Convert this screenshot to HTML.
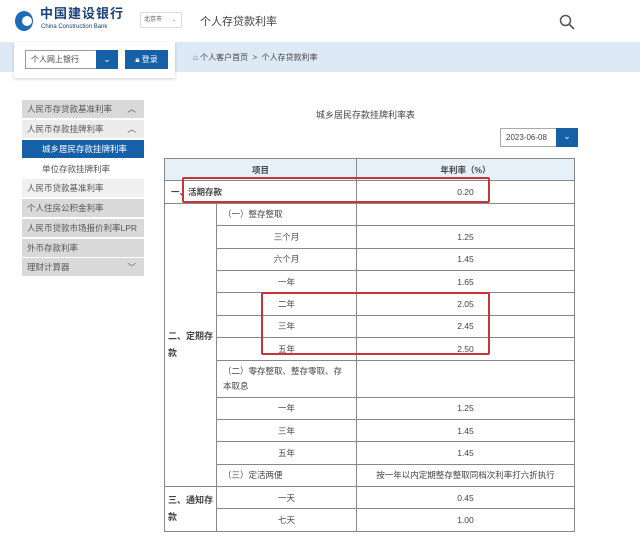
<!DOCTYPE html><html><head><meta charset="utf-8"><style>
*{margin:0;padding:0;box-sizing:border-box}
body{width:640px;height:545px;background:#fff;font-family:"Liberation Sans","Noto Sans CJK SC",sans-serif;position:relative;overflow:hidden;color:#333}
.a{position:absolute}
.side div{position:absolute;left:22px;width:122px;height:18px;font-size:8.5px;line-height:18px;padding-left:5px;color:#555}
table{position:absolute;left:164px;top:158px;width:411px;border-collapse:collapse;font-size:8.5px;color:#444;line-height:12px}
td{border:1px solid #888;padding:0 6px;height:22.4px}
.c{text-align:center}
.b{font-weight:bold}
.red{position:absolute;border:2px solid #c8343a;border-radius:2px}
</style></head><body>
<!-- header -->
<div class="a" style="left:15px;top:11px;width:18px;height:20px;border-radius:50%;background:#1d6bb5"></div>
<div class="a" style="left:22px;top:16px;width:10px;height:10px;border-radius:50%;background:#fff"></div>
<div class="a" style="left:40px;top:6px;font-size:13px;line-height:16px;font-weight:bold;color:#1a3f7a;letter-spacing:1px">中国建设银行</div>
<div class="a" style="left:41px;top:23px;font-size:6px;line-height:8px;color:#1a3f7a">China Construction Bank</div>
<div class="a" style="left:140px;top:12px;width:42px;height:16px;border:1px solid #ddd;font-size:6px;line-height:14px;padding-left:3px;color:#555">北京市 <span style="margin-left:8px;color:#999">⌄</span></div>
<div class="a" style="left:200px;top:13px;font-size:11px;color:#444">个人存贷款利率</div>
<svg class="a" style="left:559px;top:14px" width="16" height="16"><circle cx="6.5" cy="6.5" r="5" fill="none" stroke="#555" stroke-width="1.5"/><line x1="10" y1="10" x2="15" y2="15" stroke="#555" stroke-width="1.6"/></svg>
<div class="a" style="left:0;top:42px;width:640px;height:30px;background:#dde9f4"></div>
<div class="a" style="left:14px;top:42px;width:161px;height:36px;background:#fff;box-shadow:0 1px 3px rgba(0,0,0,.2)"></div>
<div class="a" style="left:25px;top:50px;width:93px;height:19px;border:1px solid #999;font-size:8px;line-height:17px;padding-left:5px;color:#444">个人网上银行</div>
<div class="a" style="left:96px;top:50px;width:22px;height:19px;background:#1660a8;color:#fff;font-size:9px;text-align:center;line-height:18px">⌄</div>
<div class="a" style="left:125px;top:50px;width:43px;height:19px;background:#1660a8;color:#fff;font-size:8px;line-height:19px;text-align:center">🔒︎ 登录</div>
<div class="a" style="left:193px;top:52px;font-size:8px;color:#444"><span style="color:#1660a8">⌂</span> 个人客户首页 &nbsp;&gt;&nbsp; 个人存贷款利率</div>
<!-- sidebar -->
<div class="side">
<div style="top:100px;background:#d9d9d9">人民币存贷款基准利率<span style="float:right;margin-right:8px">︿</span></div>
<div style="top:120px;background:#ececec">人民币存款挂牌利率<span style="float:right;margin-right:8px">︿</span></div>
<div style="top:140px;background:#1660a8;color:#fff;padding-left:20px">城乡居民存款挂牌利率</div>
<div style="top:160px;background:#fff;padding-left:20px">单位存款挂牌利率</div>
<div style="top:179px;background:#f0f0f0">人民币贷款基准利率</div>
<div style="top:199px;background:#d9d9d9">个人住房公积金利率</div>
<div style="top:219px;background:#d9d9d9">人民币贷款市场报价利率LPR</div>
<div style="top:239px;background:#d9d9d9">外币存款利率</div>
<div style="top:258px;background:#d9d9d9">理财计算器<span style="float:right;margin-right:8px">﹀</span></div>
</div>
<div class="a" style="left:316px;top:108px;font-size:9px;color:#444">城乡居民存款挂牌利率表</div>
<div class="a" style="left:500px;top:128px;width:78px;height:19px;border:1px solid #aaa;font-size:8px;line-height:17px;padding-left:5px;color:#444">2023-06-08</div>
<div class="a" style="left:556px;top:128px;width:22px;height:19px;background:#1660a8;color:#fff;font-size:9px;text-align:center;line-height:17px">⌄</div>
<table>
<colgroup><col style="width:52px"><col style="width:140px"><col></colgroup>
<tr style="background:#e6f0f8"><td colspan="2" class="c b">项目</td><td class="c b">年利率（%）</td></tr>
<tr><td colspan="2" class="b">一、活期存款</td><td class="c">0.20</td></tr>
<tr><td rowspan="12" class="b" style="line-height:17px;padding:0 3px;font-size:9px">二、定期存款</td><td>（一）整存整取</td><td></td></tr>
<tr><td class="c">三个月</td><td class="c">1.25</td></tr>
<tr><td class="c">六个月</td><td class="c">1.45</td></tr>
<tr><td class="c">一年</td><td class="c">1.65</td></tr>
<tr><td class="c">二年</td><td class="c">2.05</td></tr>
<tr><td class="c">三年</td><td class="c">2.45</td></tr>
<tr><td class="c">五年</td><td class="c">2.50</td></tr>
<tr><td style="height:37px;line-height:15px">（二）零存整取、整存零取、存本取息</td><td></td></tr>
<tr><td class="c">一年</td><td class="c">1.25</td></tr>
<tr><td class="c">三年</td><td class="c">1.45</td></tr>
<tr><td class="c">五年</td><td class="c">1.45</td></tr>
<tr><td>（三）定活两便</td><td class="c">按一年以内定期整存整取同档次利率打六折执行</td></tr>
<tr><td rowspan="2" class="b" style="line-height:17px;padding:0 3px;font-size:9px">三、通知存款</td><td class="c">一天</td><td class="c">0.45</td></tr>
<tr><td class="c">七天</td><td class="c">1.00</td></tr>
</table>
<div class="red" style="left:182px;top:177px;width:308px;height:26px"></div>
<div class="red" style="left:261px;top:292px;width:229px;height:63px"></div>
</body></html>
